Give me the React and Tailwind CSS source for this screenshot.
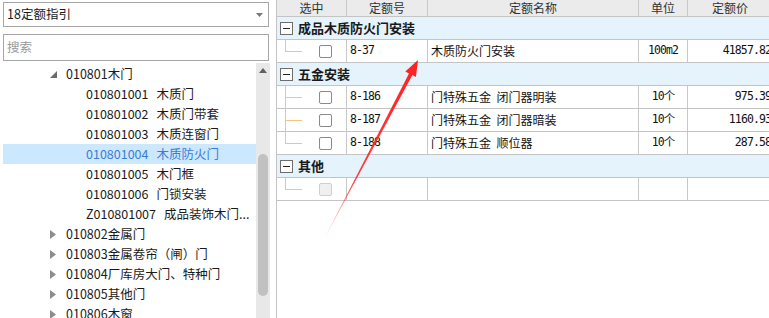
import React from 'react';

const cjk = { fontFamily: '"Noto Sans CJK SC", "Noto Sans", sans-serif' };
const mono = { fontFamily: '"DejaVu Sans Mono", "Noto Sans CJK SC", monospace' };

const treeItems = [
  { level: 0, text: '010801木门', open: true },
  { level: 1, code: '010801001', name: '木质门' },
  { level: 1, code: '010801002', name: '木质门带套' },
  { level: 1, code: '010801003', name: '木质连窗门' },
  { level: 1, code: '010801004', name: '木质防火门', selected: true },
  { level: 1, code: '010801005', name: '木门框' },
  { level: 1, code: '010801006', name: '门锁安装' },
  { level: 1, code: 'Z010801007', name: '成品装饰木门...' },
  { level: 0, text: '010802金属门' },
  { level: 0, text: '010803金属卷帘（闸）门' },
  { level: 0, text: '010804厂库房大门、特种门' },
  { level: 0, text: '010805其他门' },
  { level: 0, text: '010806木窗' },
];

const groups = [
  {
    title: '成品木质防火门安装',
    rows: [{ code: '8-37', name: '木质防火门安装', unit: '100m2', price: '41857.82' }],
  },
  {
    title: '五金安装',
    rows: [
      { code: '8-186', name: '门特殊五金  闭门器明装', unit: '10个', price: '975.39' },
      { code: '8-187', name: '门特殊五金  闭门器暗装', unit: '10个', price: '1160.93' },
      { code: '8-188', name: '门特殊五金  顺位器', unit: '10个', price: '287.58' },
    ],
  },
  {
    title: '其他',
    rows: [{ code: '', name: '', unit: '', price: '', disabled: true }],
  },
];

function TreeRow({ item }) {
  if (item.level === 0) {
    return (
      <div className="h-[20px] flex items-center text-[12.5px] text-[#1a1a1a] whitespace-nowrap">
        <div className="w-[47px] shrink-0" />
        <div className="w-[16px] shrink-0 flex items-center">
          {item.open ? (
            <svg width="7" height="7" viewBox="0 0 7 7">
              <polygon points="7,0 7,7 0,7" fill="#6b6b6b" />
            </svg>
          ) : (
            <svg width="6" height="9" viewBox="0 0 6 9">
              <polygon points="0,0 6,4.5 0,9" fill="#8c8c8c" />
            </svg>
          )}
        </div>
        <span>{item.text}</span>
      </div>
    );
  }
  return (
    <div
      className={`h-[20px] flex items-center pl-[83px] text-[12.5px] whitespace-nowrap ${
        item.selected ? 'bg-[#cce8ff] text-[#3a7bd5]' : 'text-[#1a1a1a]'
      }`}
    >
      <span>{item.code}</span>
      <span className="ml-[8px]">{item.name}</span>
    </div>
  );
}

function Cell({ w, className = '', children }) {
  return (
    <div className={`shrink-0 h-full border-r border-[#c8c8c8] flex items-center ${className}`} style={{ width: w }}>
      {children}
    </div>
  );
}

const cols = [70, 81, 211, 49, 84];

function GroupRow({ title }) {
  return (
    <div className="h-[23px] bg-[#e5f3fd] border-b border-[#c4c4c4] flex items-center pl-[3px]">
      <div className="w-[13px] h-[13px] border border-[#6e6e6e] bg-white flex items-center justify-center">
        <div className="w-[7px] h-[1px] bg-[#222]" />
      </div>
      <span className="ml-[5px] text-[13px] font-bold text-[#1a1a1a]">{title}</span>
    </div>
  );
}

function DataRow({ row, last }) {
  return (
    <div className="h-[23px] border-b border-[#c4c4c4] flex bg-white">
      <Cell w={cols[0]} className="relative pl-[42px]">
        <div className={`absolute left-[8px] top-0 w-[1px] bg-[#f7c27a] ${last ? 'h-[12px]' : 'h-full'}`} />
        <div className="absolute left-[8px] top-[11px] w-[17px] h-[1px] bg-[#f7c27a]" />
        <div
          className={`w-[13px] h-[13px] rounded-[2px] border ${
            row.disabled ? 'border-[#cfcfcf] bg-[#f0f0f0]' : 'border-[#8a8a8a] bg-white'
          }`}
        />
      </Cell>
      <Cell w={cols[1]} className="pl-[3px] text-[11.5px] tracking-[-0.9px] text-[#111]">
        <span style={mono}>{row.code}</span>
      </Cell>
      <Cell w={cols[2]} className="pl-[3px] text-[12px] text-[#111] whitespace-pre">
        {row.name}
      </Cell>
      <Cell w={cols[3]} className="justify-center text-[11.5px] tracking-[-0.9px] text-[#111]">
        <span style={mono}>{row.unit}</span>
      </Cell>
      <Cell w={cols[4]} className="justify-end pr-[1px] text-[11.5px] tracking-[-0.9px] text-[#111] border-r-0">
        <span style={mono}>{row.price}</span>
      </Cell>
    </div>
  );
}

export default function App() {
  return (
    <div className="relative w-[769px] h-[318px] overflow-hidden bg-white flex" style={cjk}>
      {/* left: quota guide tree */}
      <div className="w-[270px] shrink-0 flex flex-col pl-[3px]">
        <div className="mt-[2px] w-[266px] h-[25px] border border-[#a6a6a6] flex items-center justify-between pl-[3px] pr-[5px]">
          <span className="text-[12.5px] text-[#1a1a1a]">18定额指引</span>
          <svg width="7" height="4" viewBox="0 0 7 4">
            <polygon points="0,0 7,0 3.5,4" fill="#7a7a7a" />
          </svg>
        </div>
        <div className="mt-[7px] w-[266px] h-[27px] border border-[#a6a6a6] flex items-center pl-[3px]">
          <span className="text-[12.5px] text-[#9a9a9a]">搜索</span>
        </div>
        <div className="mt-[2px] flex flex-1 min-h-0">
          <div className="w-[253px] shrink-0 pt-[1px]">
            {treeItems.map((it, i) => (
              <TreeRow key={i} item={it} />
            ))}
          </div>
          <div className="w-[14px] shrink-0 bg-[#e8e8e8] flex flex-col items-center">
            <div className="h-[14px] flex items-center justify-center">
              <svg width="8" height="5" viewBox="0 0 8 5">
                <polygon points="4,0 8,5 0,5" fill="#606060" />
              </svg>
            </div>
            <div className="mt-[77px] w-[10px] h-[142px] rounded-full bg-[#c1c1c1]" />
          </div>
        </div>
      </div>

      {/* right: quota table */}
      <div className="ml-[6px] flex-1 min-w-0 border-l border-[#c4c4c4] overflow-hidden">
        <div className="w-[495px]">
          <div className="h-[17px] bg-[#ebebeb] border-b border-[#c4c4c4] flex text-[12px] text-[#333]">
            <Cell w={cols[0]} className="justify-center">选中</Cell>
            <Cell w={cols[1]} className="justify-center">定额号</Cell>
            <Cell w={cols[2]} className="justify-center">定额名称</Cell>
            <Cell w={cols[3]} className="justify-center">单位</Cell>
            <Cell w={cols[4]} className="justify-center border-r-0">定额价</Cell>
          </div>
          {groups.map((g, gi) => (
            <div key={gi}>
              <GroupRow title={g.title} />
              {g.rows.map((r, ri) => (
                <DataRow key={ri} row={r} last={ri === g.rows.length - 1} />
              ))}
            </div>
          ))}
        </div>
      </div>

      {/* red annotation arrow */}
      <svg className="absolute left-0 top-0 pointer-events-none" width="769" height="318" viewBox="0 0 769 318">
        <defs>
          <linearGradient id="fade" x1="321" y1="245" x2="418" y2="60" gradientUnits="userSpaceOnUse">
            <stop offset="0" stopColor="#ff2b2b" stopOpacity="0" />
            <stop offset="0.35" stopColor="#ff2b2b" stopOpacity="0.9" />
            <stop offset="1" stopColor="#ff2020" stopOpacity="1" />
          </linearGradient>
        </defs>
        <polygon
          points="418,60 405.3,71.4 409,73.4 321,245 412.4,75.1 415.9,77"
          fill="url(#fade)"
        />
      </svg>
    </div>
  );
}
